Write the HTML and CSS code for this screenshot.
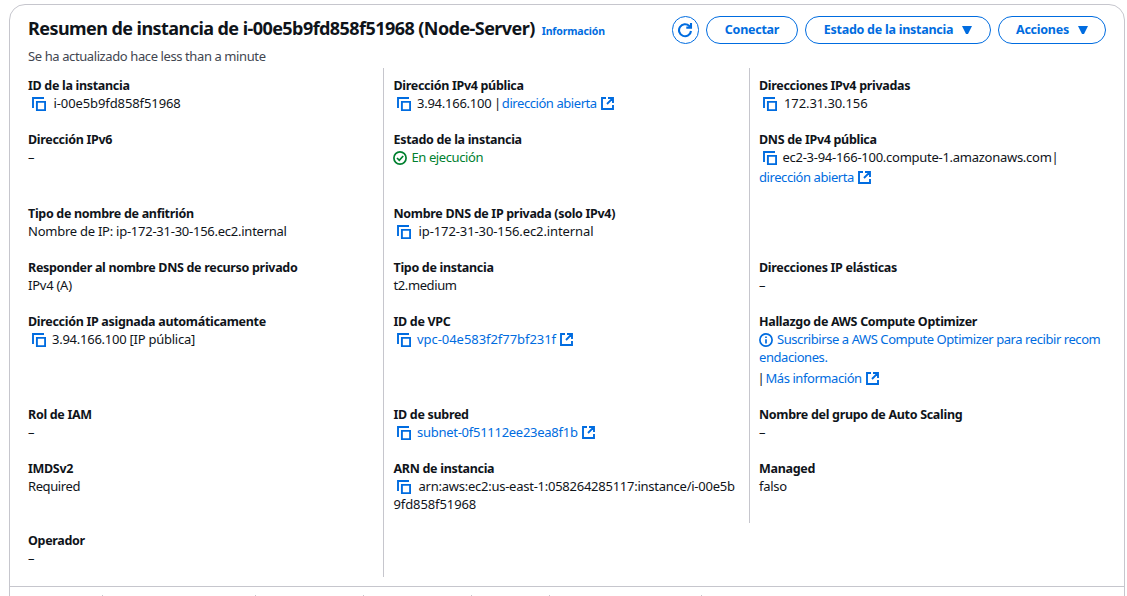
FILE: index.html
```html
<!DOCTYPE html>
<html lang="es">
<head>
<meta charset="utf-8">
<title>Resumen de instancia</title>
<link rel="stylesheet" href="styles.css">
</head>
<body>
<svg class="defs" aria-hidden="true">
  <symbol id="copy" viewBox="0 0 14 14"><path d="M1 11V1h11" /><path d="M4.900 4.900h8.200v8.200H4.900z" /></symbol>
  <symbol id="external" viewBox="0 0 13 13"><path d="M5 1H1v11h11V8M7 1h5v5M11.800 1.200L6 7" /></symbol>
  <symbol id="check" viewBox="0 0 14 14"><circle cx="7" cy="7" r="6.100" /><path d="M4 7l2.300 2.300L10.200 5" /></symbol>
  <symbol id="info" viewBox="0 0 14 14"><circle cx="7" cy="7" r="6.100" /><path d="M7 6.200V10.500M7 3.500v1.500" /></symbol>
</svg>
<main class="card">
  <header class="header">
    <div class="heading">
      <h1 class="title">Resumen de instancia de i-00e5b9fd858f51968 (Node-Server)</h1>
      <a class="info-link">Información</a>
    </div>
    <div class="actions">
      <button class="btn btn-icon" aria-label="Actualizar"><svg class="refresh" viewBox="0 0 16 16"><path d="M14 9A6 6 0 1 1 12.300 4L13.800 5.300" /><path d="M14 1v4.600H9.300" /></svg></button>
      <button class="btn btn-connect">Conectar</button>
      <button class="btn btn-state">Estado de la instancia<svg class="caret" viewBox="0 0 10 8"><path d="M0 0h10L6 8H4z" /></svg></button>
      <button class="btn btn-actions">Acciones<svg class="caret" viewBox="0 0 10 8"><path d="M0 0h10L6 8H4z" /></svg></button>
    </div>
  </header>
  <p class="updated">Se ha actualizado hace less than a minute</p>

  <section class="grid">
    <div class="cell"><h2 class="label">ID de la instancia</h2><div class="value"><svg class="copy"><use href="#copy"/></svg><span class="gap8 code">i-00e5b9fd858f51968</span></div></div>
    <div class="cell"><h2 class="label">Dirección IPv4 pública</h2><div class="value"><svg class="copy"><use href="#copy"/></svg><span class="gap6">3.94.166.100<span class="bar">|</span></span><a class="link">dirección abierta</a><svg class="external"><use href="#external"/></svg></div></div>
    <div class="cell"><h2 class="label">Direcciones IPv4 privadas</h2><div class="value"><svg class="copy"><use href="#copy"/></svg><span class="gap8 code">172.31.30.156</span></div></div>

    <div class="cell"><h2 class="label">Dirección IPv6</h2><div class="value">–</div></div>
    <div class="cell"><h2 class="label">Estado de la instancia</h2><div class="value ok"><svg class="status"><use href="#check"/></svg>En ejecución</div></div>
    <div class="cell"><h2 class="label">DNS de IPv4 pública</h2><div class="value dns"><svg class="copy"><use href="#copy"/></svg><span class="gap6">ec2-3-94-166-100.compute-1.amazonaws.com</span>|</div><div class="value second"><a class="link">dirección abierta</a><svg class="external"><use href="#external"/></svg></div></div>

    <div class="cell"><h2 class="label">Tipo de nombre de anfitrión</h2><div class="value">Nombre de IP: ip-172-31-30-156.ec2.internal</div></div>
    <div class="cell"><h2 class="label">Nombre DNS de IP privada (solo IPv4)</h2><div class="value"><svg class="copy"><use href="#copy"/></svg><span class="gap8 code">ip-172-31-30-156.ec2.internal</span></div></div>
    <div class="cell"></div>

    <div class="cell"><h2 class="label">Responder al nombre DNS de recurso privado</h2><div class="value">IPv4 (A)</div></div>
    <div class="cell"><h2 class="label">Tipo de instancia</h2><div class="value tight">t2.medium</div></div>
    <div class="cell"><h2 class="label">Direcciones IP elásticas</h2><div class="value">–</div></div>

    <div class="cell"><h2 class="label">Dirección IP asignada automáticamente</h2><div class="value"><svg class="copy"><use href="#copy"/></svg><span class="gap6">3.94.166.100 [IP pública]</span></div></div>
    <div class="cell"><h2 class="label">ID de VPC</h2><div class="value"><svg class="copy"><use href="#copy"/></svg><a class="link gap6 vpc">vpc-04e583f2f77bf231f</a><svg class="external"><use href="#external"/></svg></div></div>
    <div class="cell"><h2 class="label">Hallazgo de AWS Compute Optimizer</h2><div class="value link"><svg class="status"><use href="#info"/></svg>Suscribirse a AWS Compute Optimizer para recibir recom<br>endaciones.</div><div class="value more"><span class="bar-start">|</span><a class="link">Más información</a><svg class="external"><use href="#external"/></svg></div></div>

    <div class="cell"><h2 class="label">Rol de IAM</h2><div class="value">–</div></div>
    <div class="cell"><h2 class="label">ID de subred</h2><div class="value"><svg class="copy"><use href="#copy"/></svg><a class="link gap6 subnet">subnet-0f51112ee23ea8f1b</a><svg class="external"><use href="#external"/></svg></div></div>
    <div class="cell"><h2 class="label">Nombre del grupo de Auto Scaling</h2><div class="value">–</div></div>

    <div class="cell"><h2 class="label">IMDSv2</h2><div class="value tight">Required</div></div>
    <div class="cell"><h2 class="label">ARN de instancia</h2><div class="value"><svg class="copy"><use href="#copy"/></svg><span class="gap8">arn:aws:ec2:us-east-1:058264285117:instance/i-00e5b</span><br><span class="code">9fd858f51968</span></div></div>
    <div class="cell"><h2 class="label">Managed</h2><div class="value">falso</div></div>

    <div class="cell"><h2 class="label">Operador</h2><div class="value">–</div></div>
    <div class="cell"></div>
  </section>
  <nav class="tabs"><i class="tab t1"></i><i class="tab t2"></i><i class="tab t3"></i><i class="tab t4"></i><i class="tab t5"></i><i class="tab t6"></i></nav>
</main>
</body>
</html>
```
FILE: styles.css
```css
* { box-sizing: border-box; }
body {
  margin: 0;
  height: 596px;
  overflow: hidden;
  background: #fff;
  color: #0f141a;
  font: 13px/18px "Noto Sans", "Open Sans", sans-serif;
  letter-spacing: -0.25px;
}
.defs { position: absolute; width: 0; height: 0; }
svg { fill: none; stroke: currentColor; stroke-width: 1.9; }
.card {
  width: 1116px;
  height: 620px;
  margin: 4px 0 0 9px;
  border: 1px solid #c6c6cd;
  border-radius: 16px;
}
.header {
  display: flex;
  justify-content: space-between;
  height: 39px;
  padding: 11px 18px 0;
}
.heading { display: flex; align-items: baseline; padding-top: 1px; }
.title { margin: 0; font-size: 18px; line-height: 22px; font-weight: 700; letter-spacing: -0.56px; white-space: nowrap; }
.info-link { margin-left: 7px; color: #006ce0; font-size: 10.5px; font-weight: 700; letter-spacing: -0.15px; }
.actions { display: flex; gap: 7px; }
.btn {
  display: flex;
  align-items: center;
  justify-content: center;
  height: 28px;
  padding: 0 0 1px;
  border: 1.6px solid #006ce0;
  border-radius: 14px;
  background: #fff;
  color: #006ce0;
  font: 700 12.5px/18px "Noto Sans", "Open Sans", sans-serif;
  letter-spacing: -0.25px;
  white-space: nowrap;
}
.btn-icon { width: 27px; padding: 0; }
.btn-connect { width: 92px; }
.btn-state { width: 186px; }
.btn-actions { width: 108px; }
.refresh { width: 16px; height: 16px; margin-right: 1px; stroke-width: 2.1; }
.caret { width: 10px; height: 8px; margin-left: 9px; fill: currentColor; stroke: none; }
.updated { margin: 0; padding: 3px 18px 0; height: 24px; color: #424650; letter-spacing: -0.4px; }
.grid { display: grid; grid-template-columns: 355px 366px 366px; padding-left: 18px; }
.cell { padding: 8px 0 10px; white-space: nowrap; }
.cell:nth-child(3n + 2), .cell:nth-child(3n) { padding-left: 9.5px; border-left: 1px solid #c6c6cd; }
.cell:nth-child(3n) { padding-left: 9px; }
.label { margin: 0 0 -1px; padding-top: 1px; font-size: 12.5px; line-height: 18px; font-weight: 700; letter-spacing: -0.31px; }
.value { min-height: 18px; }
.second { padding-top: 2px; }
.more { padding-top: 3px; }
.link { color: #006ce0; letter-spacing: -0.43px; }
.code { letter-spacing: -0.1px; }
.vpc { letter-spacing: -0.05px; }
.subnet { letter-spacing: -0.27px; }
.dns { letter-spacing: -0.27px; }
.tight { letter-spacing: -0.4px; }
.ok { color: #00802f; letter-spacing: -0.4px; }
.bar { margin: 0 1px 0 2.5px; }
.bar-start { margin: 0 1px 0 -1.5px; }
.copy { width: 14px; height: 14px; margin-left: 4px; vertical-align: -3px; color: #006ce0; }
.cell:nth-child(3n + 2) .copy, .cell:nth-child(3n) .copy { margin-left: 3.5px; }
.external { width: 13px; height: 13px; margin-left: 4px; vertical-align: -2px; color: #006ce0; }
.status { width: 14px; height: 14px; margin-left: -0.5px; margin-right: 4.5px; vertical-align: -3px; stroke-width: 1.7; }
.gap8 { margin-left: 7.5px; }
.gap6 { margin-left: 6px; }
.tabs { display: flex; height: 10px; margin-top: 9px; padding-top: 8px; border-top: 1px solid #c6c6cd; }
.tab { flex: none; width: 1px; height: 1px; background: #c6c6cd; }
.t1 { margin-left: 92px; }
.t2 { margin-left: 152px; }
.t3 { margin-left: 107px; }
.t4 { margin-left: 107px; }
.t5 { margin-left: 77px; }
.t6 { margin-left: 151px; }
```
